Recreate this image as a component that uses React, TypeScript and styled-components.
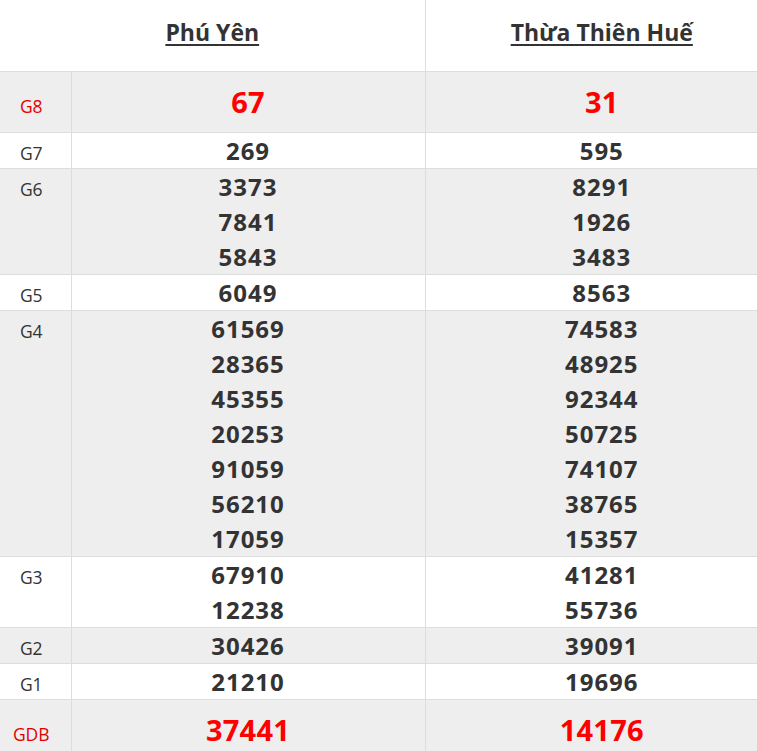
import styled, { createGlobalStyle } from "styled-components";

const GlobalStyle = createGlobalStyle`
  html, body {
    margin: 0;
    padding: 0;
    background: #ffffff;
    overflow: hidden;
  }
  body {
    font-family: "Open Sans", "Liberation Sans", sans-serif;
    color: #333333;
  }
`;

const Table = styled.table`
  width: 778px;
  border-collapse: collapse;
  table-layout: fixed;
`;

const HeadRow = styled.tr`
  height: 71px;
  background: #ffffff;
`;

const HeadCell = styled.th`
  padding: 0 0 7px;
  text-align: center;
  vertical-align: middle;
  font-size: 23px;
  font-weight: 700;
  color: #333333;
  border-bottom: 1px solid #dddddd;
  & + & {
    border-left: 1px solid #dddddd;
  }

  span {
    text-decoration: underline;
    text-decoration-thickness: 2px;
    text-underline-offset: 3px;
  }
`;

const Row = styled.tr<{ $shade: boolean }>`
  background: ${(p) => (p.$shade ? "#eeeeee" : "#ffffff")};
  border-bottom: 1px solid #dddddd;
`;

const Label = styled.td<{ $special: boolean }>`
  width: 70px;
  padding: 0 8px 0 0;
  box-sizing: border-box;
  text-align: center;
  vertical-align: baseline;
  font-size: 17.5px;
  color: ${(p) => (p.$special ? "#e50000" : "#333333")};
  border-right: 1px solid #dddddd;
`;

const Cell = styled.td`
  padding: 0;
  text-align: center;
  vertical-align: baseline;
  & + & {
    border-left: 1px solid #dddddd;
  }
`;

const Num = styled.div<{ $special: boolean }>`
  font-weight: 700;
  font-size: ${(p) => (p.$special ? "29px" : "24px")};
  letter-spacing: ${(p) => (p.$special ? "0.2px" : "1px")};
  line-height: ${(p) => (p.$special ? "60px" : "35px")};
  color: ${(p) => (p.$special ? "#ff0000" : "#333333")};
`;

type Prize = { name: string; a: string[]; b: string[] };

const prizes: Prize[] = [
  { name: "G8", a: ["67"], b: ["31"] },
  { name: "G7", a: ["269"], b: ["595"] },
  { name: "G6", a: ["3373", "7841", "5843"], b: ["8291", "1926", "3483"] },
  { name: "G5", a: ["6049"], b: ["8563"] },
  {
    name: "G4",
    a: ["61569", "28365", "45355", "20253", "91059", "56210", "17059"],
    b: ["74583", "48925", "92344", "50725", "74107", "38765", "15357"],
  },
  { name: "G3", a: ["67910", "12238"], b: ["41281", "55736"] },
  { name: "G2", a: ["30426"], b: ["39091"] },
  { name: "G1", a: ["21210"], b: ["19696"] },
  { name: "GDB", a: ["37441"], b: ["14176"] },
];

export default function App() {
  return (
    <>
      <GlobalStyle />
      <Table>
        <colgroup>
          <col style={{ width: 71 }} />
          <col style={{ width: 354 }} />
          <col />
        </colgroup>
        <thead>
          <HeadRow>
            <HeadCell colSpan={2}>
              <span>Phú Yên</span>
            </HeadCell>
            <HeadCell>
              <span>Thừa Thiên Huế</span>
            </HeadCell>
          </HeadRow>
        </thead>
        <tbody>
          {prizes.map((p, i) => {
            const special = p.name === "G8" || p.name === "GDB";
            return (
              <Row key={p.name} $shade={i % 2 === 0}>
                <Label $special={special}>{p.name}</Label>
                <Cell>
                  {p.a.map((n, k) => (
                    <Num key={k} $special={special}>
                      {n}
                    </Num>
                  ))}
                </Cell>
                <Cell>
                  {p.b.map((n, k) => (
                    <Num key={k} $special={special}>
                      {n}
                    </Num>
                  ))}
                </Cell>
              </Row>
            );
          })}
        </tbody>
      </Table>
    </>
  );
}
